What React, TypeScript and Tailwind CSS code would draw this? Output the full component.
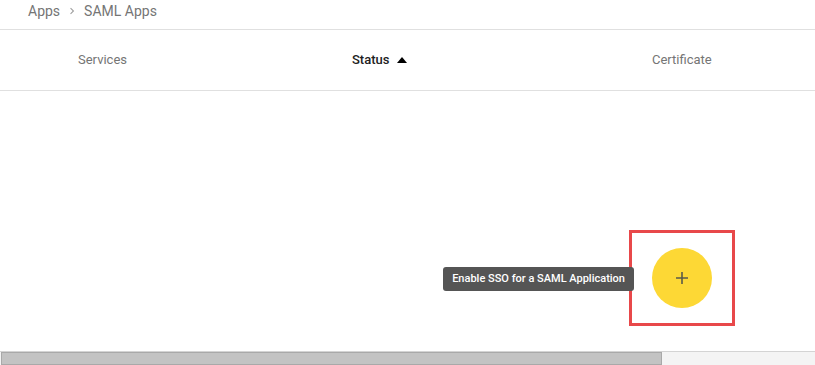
import React from 'react';

export default function App() {
  return (
    <div
      className="flex flex-col h-[365px] w-[815px] bg-white overflow-hidden"
      style={{ fontFamily: 'Roboto, "Liberation Sans", sans-serif' }}
    >
      {/* Breadcrumb */}
      <div className="h-[30px] border-b border-[#e0e0e0] flex items-start pl-[28px] pt-[1px] text-[14px] text-[#757575]">
        <span>Apps</span>
        <svg width="20" height="20" viewBox="0 0 24 24" className="mx-[2px]" fill="#9e9e9e">
          <path d="M10 6 8.6 7.4 13.2 12l-4.6 4.6L10 18l6-6z" transform="translate(12 12) scale(0.65) translate(-12 -12)" />
        </svg>
        <span>SAML Apps</span>
      </div>

      {/* Table header */}
      <div className="h-[61px] border-b border-[#e0e0e0] flex items-center text-[13px] text-[#757575]">
        <div className="w-[352px] pl-[78px]">Services</div>
        <div className="w-[300px] flex items-center text-[#212121] font-medium">
          <span>Status</span>
          <svg width="10" height="6" viewBox="0 0 10 6" className="ml-[8px]">
            <path d="M0 6 5 0 10 6z" fill="#000" />
          </svg>
        </div>
        <div>Certificate</div>
      </div>

      {/* Body */}
      <div className="flex-1 flex items-end justify-end pr-[80px] pb-[25px]">
        <div className="relative w-[106px] h-[96px] border-[3px] border-[#e8484a] flex items-center justify-center">
          <button className="w-[60px] h-[60px] rounded-full bg-[#fdd835] flex items-center justify-center">
            <svg width="12" height="12" viewBox="0 0 12 12">
              <path d="M6 0v12M0 6h12" stroke="#5a5a4a" strokeWidth="1.6" />
            </svg>
          </button>
          <div className="absolute right-[98px] top-[34px] h-[24px] px-[9px] rounded-[3px] bg-[#555555] text-white text-[11px] font-medium flex items-center whitespace-nowrap">
            Enable SSO for a SAML Application
          </div>
        </div>
      </div>

      {/* Horizontal scrollbar */}
      <div className="h-[14px] border-t border-[#d4d4d4] bg-[#f4f4f4] flex items-stretch">
        <div className="w-[661px] ml-[1px] bg-[#c3c3c3] border border-[#a9a9a9]" />
      </div>
    </div>
  );
}
